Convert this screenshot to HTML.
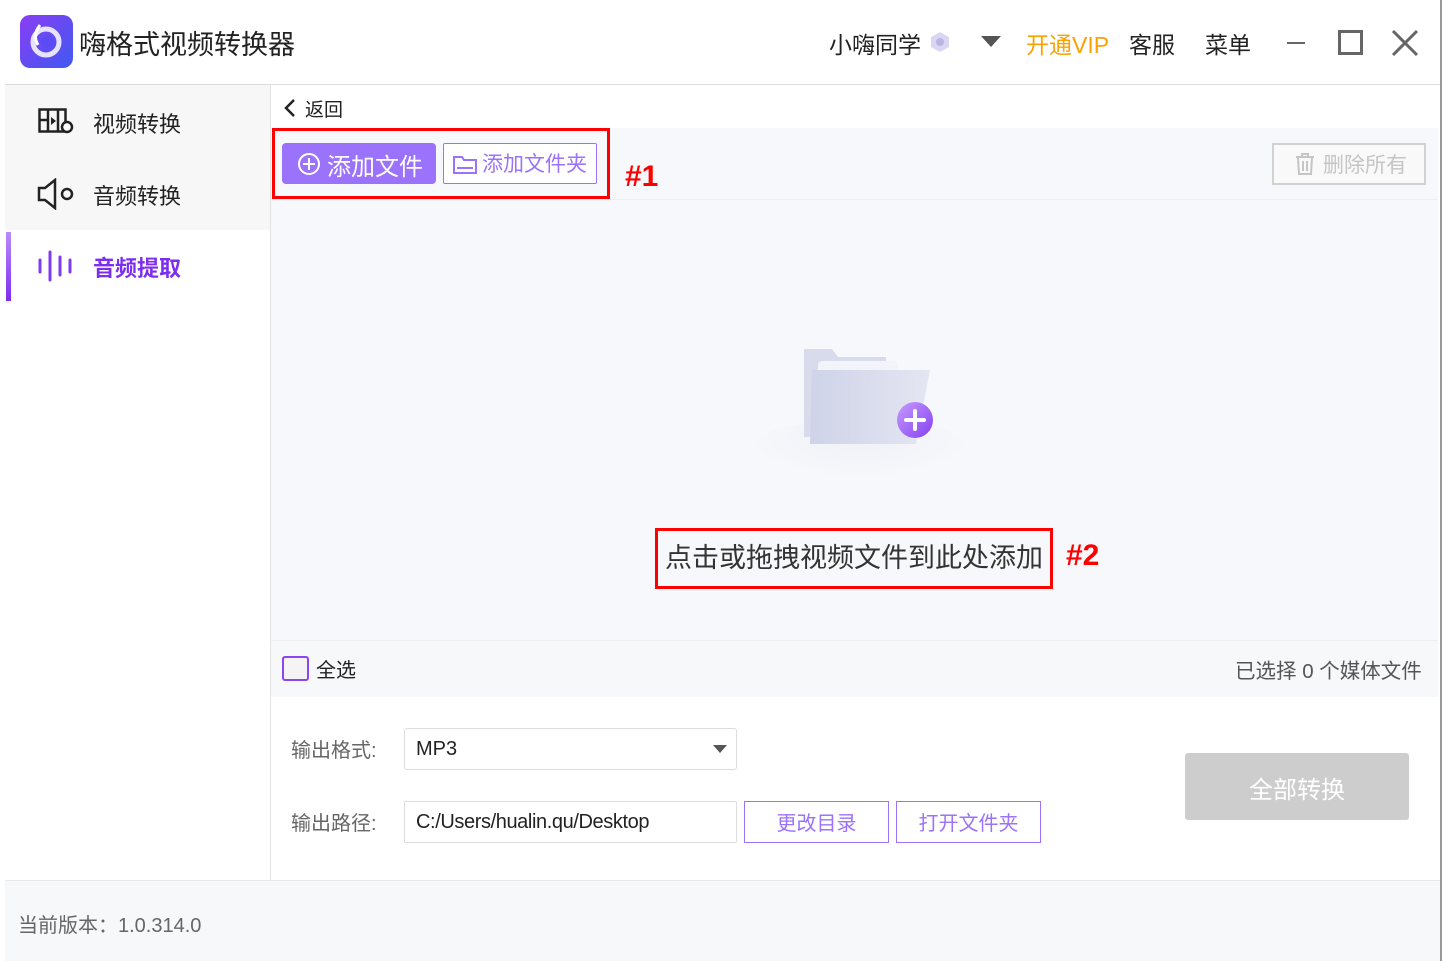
<!DOCTYPE html>
<html><head><meta charset="utf-8"><style>
*{margin:0;padding:0;box-sizing:border-box}
body{width:1442px;height:961px;position:relative;overflow:hidden;background:#fff;font-family:"Liberation Sans","Noto Sans CJK SC",sans-serif;color:#222}
.a{position:absolute}
</style></head><body>
<!-- header -->
<div class="a" style="left:20px;top:15px;width:53px;height:53px;border-radius:10px;background:linear-gradient(135deg,#8a3df5,#3f5af0)"></div>
<svg class="a" style="left:20px;top:15px" width="53" height="53" viewBox="0 0 53 53"><circle cx="26" cy="27" r="13" fill="none" stroke="#e8e4ff" stroke-width="5"/><circle cx="27" cy="27" r="6" fill="#5a4bf2"/><path d="M20 10 Q12 20 18 30" stroke="#fff" stroke-width="3" fill="none"/></svg>
<div class="a" style="left:79px;top:23px;font-size:27px;color:#222">嗨格式视频转换器</div>
<div class="a" style="left:829px;top:26px;font-size:23px;color:#222">小嗨同学</div>
<svg class="a" style="left:929px;top:31px" width="22" height="22"><polygon points="11,1 20,6 20,16 11,21 2,16 2,6" fill="#d8d6f2"/><circle cx="11" cy="11" r="4" fill="#b8b4e6"/></svg>
<div class="a" style="left:981px;top:36px;width:0;height:0;border-left:10px solid transparent;border-right:10px solid transparent;border-top:11px solid #555"></div>
<div class="a" style="left:1026px;top:26px;font-size:23px;color:#f9a300">开通VIP</div>
<div class="a" style="left:1129px;top:26px;font-size:23px;color:#222">客服</div>
<div class="a" style="left:1205px;top:26px;font-size:23px;color:#222">菜单</div>
<div class="a" style="left:1287px;top:42px;width:18px;height:2px;background:#666"></div>
<div class="a" style="left:1338px;top:30px;width:25px;height:25px;border:3px solid #666"></div>
<svg class="a" style="left:1391px;top:29px" width="28" height="28"><path d="M2 2L26 26M26 2L2 26" stroke="#666" stroke-width="3"/></svg>
<div class="a" style="left:5px;top:84px;width:1435px;height:1px;background:#dcdcdc"></div>
<div class="a" style="left:1440px;top:0;width:2px;height:961px;background:#999"></div>
<!-- sidebar -->
<div class="a" style="left:5px;top:85px;width:265px;height:145px;background:#f7f7f7"></div>
<div class="a" style="left:270px;top:85px;width:1px;height:795px;background:#e3e3e3"></div>
<svg class="a" style="left:38px;top:108px" width="38" height="28"><rect x="1.5" y="1.5" width="26" height="22" fill="none" stroke="#222" stroke-width="2.5"/><path d="M10 2v22M20 2v22M2 12h8" stroke="#222" stroke-width="2.5"/><path d="M13 9l5 4-5 4z" fill="#222"/><circle cx="29" cy="19" r="5" fill="#fff" stroke="#222" stroke-width="2.5"/></svg>
<div class="a" style="left:93px;top:107px;font-size:22px">视频转换</div>
<svg class="a" style="left:37px;top:178px" width="40" height="32"><path d="M2 10h6l10-8v28l-10-8H2z" fill="none" stroke="#222" stroke-width="2.5"/><circle cx="30" cy="16" r="5" fill="none" stroke="#222" stroke-width="2.5"/></svg>
<div class="a" style="left:93px;top:179px;font-size:22px">音频转换</div>
<div class="a" style="left:6px;top:232px;width:5px;height:69px;background:linear-gradient(#b98cf9,#7d2cf2)"></div>
<svg class="a" style="left:37px;top:249px" width="38" height="34"><path d="M3 11v12M13 3v28M23 8v18M33 11v12" stroke="#7d3cf2" stroke-width="3" stroke-linecap="round"/></svg>
<div class="a" style="left:93px;top:251px;font-size:22px;font-weight:bold;color:#7d2cf2">音频提取</div>
<!-- main -->
<svg class="a" style="left:283px;top:98px" width="14" height="20"><path d="M11 2L3 10l8 8" stroke="#222" stroke-width="2.5" fill="none"/></svg>
<div class="a" style="left:305px;top:95px;font-size:19px">返回</div>
<div class="a" style="left:271px;top:128px;width:1167px;height:512px;background:#f7f8fb"></div>
<div class="a" style="left:271px;top:199px;width:1167px;height:1px;background:#eceef2"></div>
<div class="a" style="left:282px;top:143px;width:154px;height:41px;border-radius:4px;background:#9b72fb"></div>
<svg class="a" style="left:297px;top:152px" width="24" height="24"><circle cx="12" cy="12" r="10" fill="none" stroke="#fff" stroke-width="2"/><path d="M12 6v12M6 12h12" stroke="#fff" stroke-width="2"/></svg>
<div class="a" style="left:327px;top:147px;font-size:24px;color:#fff">添加文件</div>
<div class="a" style="left:443px;top:143px;width:154px;height:41px;border:1px solid #9b72fb;border-radius:2px;background:#fff"></div>
<svg class="a" style="left:452px;top:153px" width="26" height="22"><path d="M2 4h8l2 3h12v13H2z" fill="none" stroke="#9b72fb" stroke-width="2"/><path d="M5 15h16" stroke="#9b72fb" stroke-width="2"/></svg>
<div class="a" style="left:482px;top:148px;font-size:21px;color:#9b72fb">添加文件夹</div>
<div class="a" style="left:272px;top:128px;width:338px;height:71px;border:3px solid #f00"></div>
<div class="a" style="left:625px;top:160px;font-size:30px;font-weight:bold;color:#f00">#1</div>
<div class="a" style="left:1272px;top:143px;width:154px;height:42px;border:2px solid #d2d2d2;background:#f9f9fa"></div>
<svg class="a" style="left:1294px;top:152px" width="22" height="24"><path d="M2 5h18M8 5V2h6v3M4 6l1 16h12l1-16M9 9v10M13 9v10" stroke="#c5c5c5" stroke-width="2" fill="none"/></svg>
<div class="a" style="left:1323px;top:149px;font-size:21px;color:#c5c5c5">删除所有</div>
<!-- folder -->
<div class="a" style="left:745px;top:420px;width:230px;height:60px;border-radius:50%;background:radial-gradient(ellipse at 50% 30%,#f0f1f7,rgba(247,248,251,0) 70%)"></div>
<svg class="a" style="left:798px;top:345px" width="140" height="100"><defs><linearGradient id="g" x1="0" x2="1"><stop offset="0" stop-color="#cfd3e8"/><stop offset="1" stop-color="#e4e6f2"/></linearGradient><linearGradient id="p" x1="0" y1="0" x2="1" y2="1"><stop offset="0" stop-color="#c79bff"/><stop offset="1" stop-color="#8440f0"/></linearGradient></defs><path d="M6 4h28l6 8h48v80H6z" fill="#d8dbec" rx="4"/><rect x="20" y="16" width="80" height="20" rx="4" fill="#f3f4f9"/><path d="M14 25h118l-14 74H12z" fill="url(#g)"/><circle cx="117" cy="75" r="18" fill="url(#p)"/><path d="M117 66v18M108 75h18" stroke="#fff" stroke-width="4" stroke-linecap="round"/></svg>
<div class="a" style="left:665px;top:536px;font-size:27px;color:#333">点击或拖拽视频文件到此处添加</div>
<div class="a" style="left:655px;top:528px;width:398px;height:61px;border:3px solid #f00"></div>
<div class="a" style="left:1066px;top:539px;font-size:30px;font-weight:bold;color:#f00">#2</div>
<div class="a" style="left:271px;top:640px;width:1167px;height:1px;background:#eceef2"></div>
<div class="a" style="left:271px;top:641px;width:1167px;height:56px;background:#f7f8fa"></div>
<div class="a" style="left:282px;top:656px;width:27px;height:25px;border:2px solid #8a45f5;border-radius:3px;background:#f4f4f4"></div>
<div class="a" style="left:316px;top:654px;font-size:20px;color:#222">全选</div>
<div class="a" style="left:1235px;top:654px;font-size:20.5px;color:#555">已选择 0 个媒体文件</div>
<!-- output -->
<div class="a" style="left:291px;top:734px;font-size:20px;color:#666">输出格式:</div>
<div class="a" style="left:404px;top:728px;width:333px;height:42px;border:1px solid #ddd;border-radius:3px"></div>
<div class="a" style="left:416px;top:738px;font-size:20px;color:#222">MP3</div>
<div class="a" style="left:713px;top:745px;border-left:7px solid transparent;border-right:7px solid transparent;border-top:8px solid #555"></div>
<div class="a" style="left:291px;top:807px;font-size:20px;color:#666">输出路径:</div>
<div class="a" style="left:404px;top:801px;width:333px;height:42px;border:1px solid #ddd;border-radius:2px"></div>
<div class="a" style="left:416px;top:811px;font-size:20px;color:#222;letter-spacing:-0.4px">C:/Users/hualin.qu/Desktop</div>
<div class="a" style="left:744px;top:801px;width:145px;height:42px;border:1px solid #9b72fb"></div>
<div class="a" style="left:744px;top:807px;width:145px;text-align:center;font-size:20px;color:#9b72fb">更改目录</div>
<div class="a" style="left:896px;top:801px;width:145px;height:42px;border:1px solid #9b72fb"></div>
<div class="a" style="left:896px;top:807px;width:145px;text-align:center;font-size:20px;color:#9b72fb">打开文件夹</div>
<div class="a" style="left:1185px;top:753px;width:224px;height:67px;border-radius:3px;background:#cdcdcd"></div>
<div class="a" style="left:1185px;top:770px;width:224px;text-align:center;font-size:24px;color:#fff">全部转换</div>
<!-- footer -->
<div class="a" style="left:5px;top:880px;width:1435px;height:81px;background:#f7f8fa;border-top:1px solid #e8e8e8"></div>
<div class="a" style="left:18px;top:909px;font-size:20px;color:#666">当前版本：1.0.314.0</div>
</body></html>
